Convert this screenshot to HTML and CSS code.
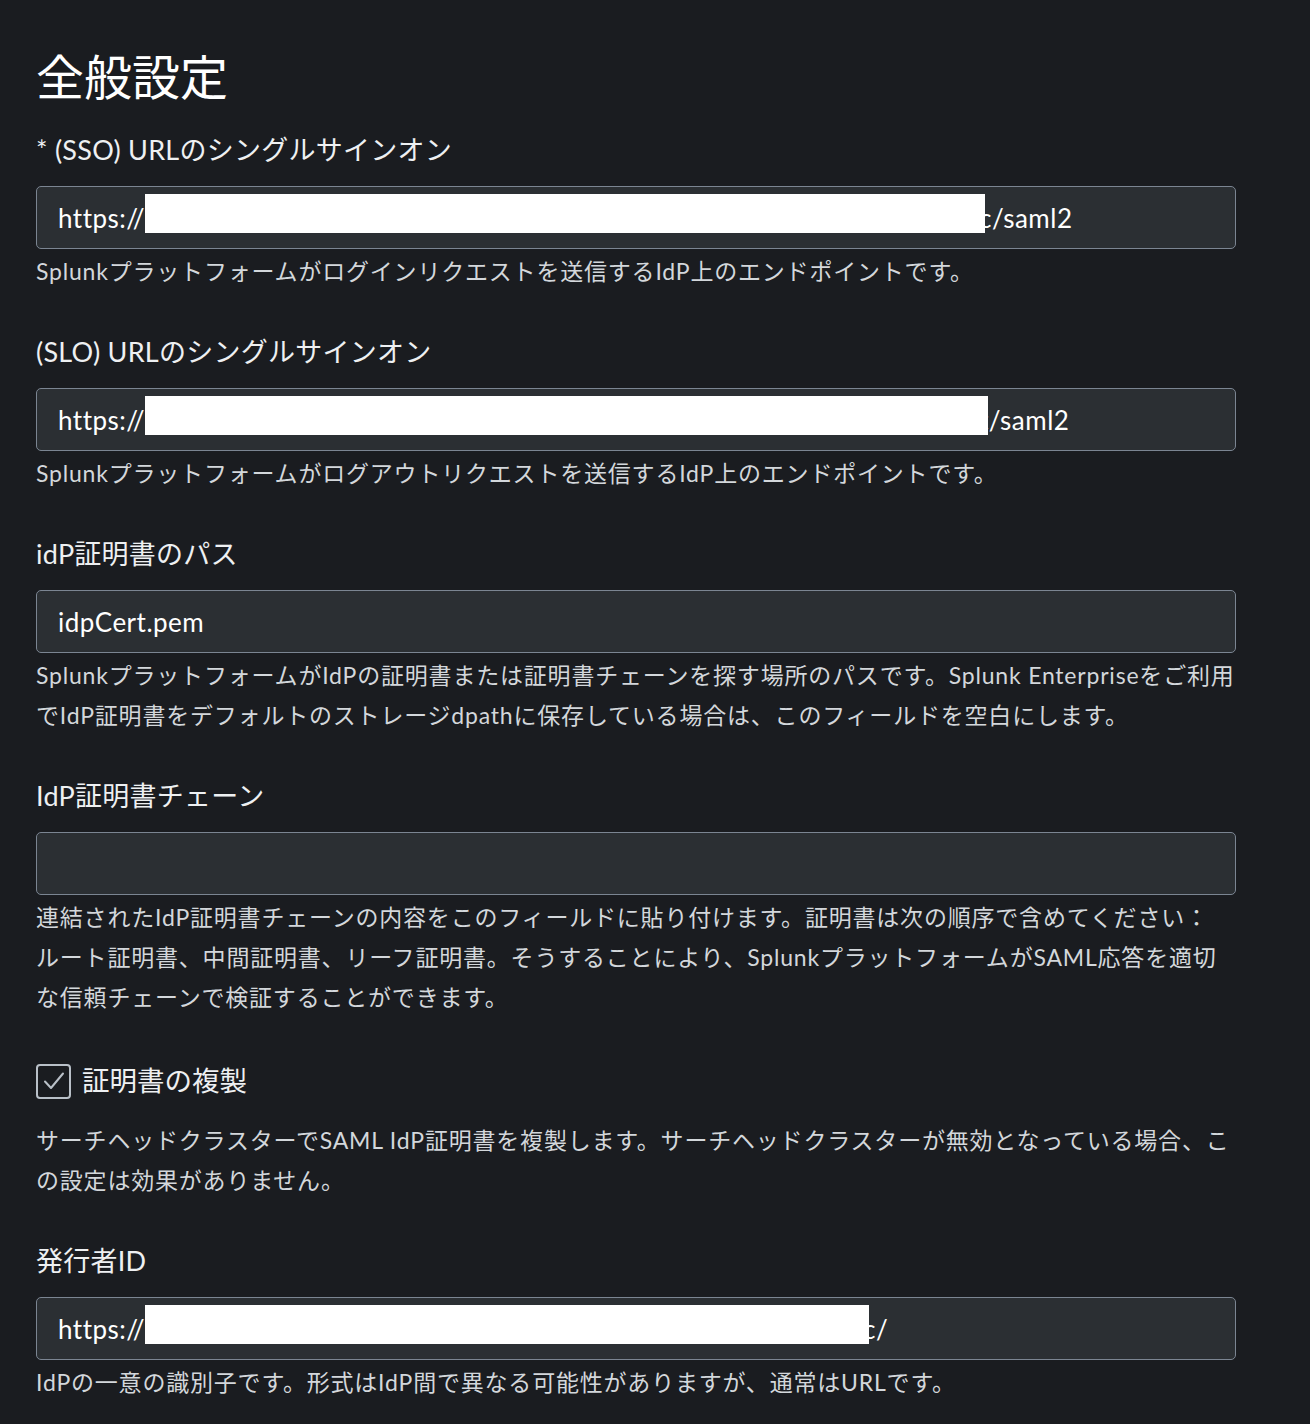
FILE: index.html
```html
<!DOCTYPE html>
<html lang="ja">
<head>
<meta charset="utf-8">
<title>全般設定</title>
<link rel="stylesheet" href="styles.css">
</head>
<body>
<main class="page">
  <h1 class="title">全般設定</h1>

  <section class="field">
    <label class="label">* (SSO) URLのシングルサインオン</label>
    <div class="input"><span class="txt">https://</span><span class="redact r1"></span><span class="txt">c/saml2</span></div>
    <p class="help">Splunkプラットフォームがログインリクエストを送信するIdP上のエンドポイントです。</p>
  </section>

  <section class="field">
    <label class="label">(SLO) URLのシングルサインオン</label>
    <div class="input"><span class="txt">https://</span><span class="redact r2"></span><span class="txt">t/saml2</span></div>
    <p class="help">Splunkプラットフォームがログアウトリクエストを送信するIdP上のエンドポイントです。</p>
  </section>

  <section class="field">
    <label class="label">idP証明書のパス</label>
    <div class="input"><span class="txt">idpCert.pem</span></div>
    <p class="help">SplunkプラットフォームがIdPの証明書または証明書チェーンを探す場所のパスです。Splunk Enterpriseをご利用<br>でIdP証明書をデフォルトのストレージdpathに保存している場合は、このフィールドを空白にします。</p>
  </section>

  <section class="field">
    <label class="label">IdP証明書チェーン</label>
    <div class="input"></div>
    <p class="help">連結されたIdP証明書チェーンの内容をこのフィールドに貼り付けます。証明書は次の順序で含めてください：<br>ルート証明書、中間証明書、リーフ証明書。そうすることにより、SplunkプラットフォームがSAML応答を適切<br>な信頼チェーンで検証することができます。</p>
  </section>

  <section class="field">
    <div class="check-row">
      <span class="checkbox">
        <svg width="22" height="20" viewBox="0 0 22 20"><path d="M2 10.5 L8 17 L20 2.5" fill="none" stroke="#b9c0c8" stroke-width="2" stroke-linecap="round" stroke-linejoin="round"/></svg>
      </span>
      <span class="check-label">証明書の複製</span>
    </div>
    <p class="help check-help">サーチヘッドクラスターでSAML IdP証明書を複製します。サーチヘッドクラスターが無効となっている場合、こ<br>の設定は効果がありません。</p>
  </section>

  <section class="field">
    <label class="label">発行者ID</label>
    <div class="input"><span class="txt">https://</span><span class="redact r3"></span><span class="txt">c/</span></div>
    <p class="help">IdPの一意の識別子です。形式はIdP間で異なる可能性がありますが、通常はURLです。</p>
  </section>
</main>
</body>
</html>
```
FILE: styles.css
```css
html, body {
  margin: 0;
  padding: 0;
  background: #1a1c20;
}
body {
  font-family: "Lato", "Noto Sans CJK JP", sans-serif;
  color: #f2f4f5;
}
.page {
  width: 1200px;
  padding: 49px 0 0 36px;
}
.title {
  margin: 0 0 27px;
  font-size: 48px;
  line-height: 56px;
  font-weight: 400;
  color: #ffffff;
}
.field {
  display: flex;
  flex-direction: column;
  margin-bottom: 43px;
}
.label {
  display: block;
  font-size: 27px;
  line-height: 36px;
  height: 36px;
  margin-bottom: 18px;
  color: #eef0f2;
  white-space: nowrap;
  letter-spacing: 0.25px;
}
.input {
  box-sizing: border-box;
  height: 63px;
  width: 1200px;
  border: 1.5px solid #7b8592;
  border-radius: 5px;
  background: #2b2f33;
  display: flex;
  align-items: center;
  padding-left: 21px;
  font-size: 26px;
  letter-spacing: 0.5px;
  color: #ffffff;
  overflow: hidden;
  white-space: nowrap;
}
.redact {
  display: inline-block;
  background: #ffffff;
  height: 39px;
  margin-top: -9px;
  position: relative;
  z-index: 1;
  flex: none;
}
.r1 { width: 840px; margin-right: -6px; }
.r2 { width: 843px; margin-right: -9px; }
.r3 { width: 724px; margin-right: -6px; }
.help {
  margin: 2px 0 0;
  font-size: 23px;
  line-height: 40px;
  color: #d3d7db;
  white-space: nowrap;
  letter-spacing: 0.8px;
}
.check-row {
  display: flex;
  align-items: center;
  height: 40px;
  gap: 11px;
  margin-top: 1px;
}
.checkbox {
  box-sizing: border-box;
  width: 35px;
  height: 35px;
  border: 2px solid #b9c0c8;
  border-radius: 4px;
  display: flex;
  align-items: center;
  justify-content: center;
}
.check-label {
  font-size: 27.5px;
  line-height: 36px;
  color: #eef0f2;
}
.check-help {
  margin-top: 19px;
}
```
